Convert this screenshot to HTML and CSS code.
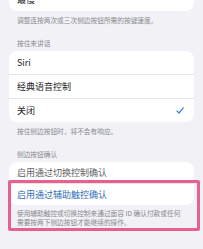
FILE: index.html
```html
<!DOCTYPE html>
<html lang="zh-CN">
<head>
<meta charset="utf-8">
<link rel="stylesheet" href="styles.css">
</head>
<body>
<div class="page">
  <div class="card first">
    <div class="row">最慢</div>
  </div>
  <p class="foot">调整连按两次或三次侧边按钮所需的按键速度。</p>

  <p class="head">按住来讲话</p>
  <div class="card">
    <div class="row">Siri</div>
    <div class="row">经典语音控制</div>
    <div class="row">关闭
      <svg class="check" width="8" height="7" viewBox="0 0 8 7"><path d="M0.8 3.8 L3 6 L7.2 0.8" fill="none" stroke="#3a7fe0" stroke-width="1.2" stroke-linecap="round" stroke-linejoin="round"/></svg>
    </div>
  </div>
  <p class="foot">按住侧边按钮时，将不会有响应。</p>

  <p class="head">侧边按钮确认</p>
  <div class="card compact">
    <div class="row dim">启用通过切换控制确认</div>
    <div class="row link">启用通过辅助触控确认</div>
  </div>
  <p class="foot tight">使用辅助触控或切换控制来通过面容 ID 确认付款或任何需要按两下侧边按钮才能继续的操作。</p>

  <div class="highlight"></div>
</div>
</body>
</html>
```

FILE: styles.css
```css
html, body {
  margin: 0;
  padding: 0;
  background: #f1f1f6;
}

body {
  font-family: "Noto Sans CJK SC", "Noto Sans", sans-serif;
  width: 203px;
  height: 249px;
  overflow: hidden;
}

.page {
  position: relative;
  display: flow-root;
  height: 249px;
  padding: 0 9px;
}

.card {
  background: #ffffff;
  border-radius: 8px;
  overflow: hidden;
}

.card.first {
  margin-top: -12px;
}

.row {
  position: relative;
  height: 23px;
  display: flex;
  align-items: center;
  justify-content: space-between;
  padding: 0 10px 0 8px;
  font-size: 9px;
  color: #1c1c1e;
}

.row + .row {
  border-top: 1px solid #e6e6ea;
}

.compact .row {
  height: 21px;
}

.row.dim {
  color: #5e5e62;
}

.row.link {
  color: #2f6db6;
}

.check {
  display: block;
}

.foot {
  margin: 0;
  padding: 5px 8px 0;
  font-size: 6.7px;
  line-height: 9px;
  color: #8a8a8e;
}

.foot.tight {
  padding-top: 4px;
  line-height: 8.5px;
}

.head {
  margin: 13.5px 0 3.5px;
  padding: 0 8px;
  font-size: 6.7px;
  line-height: 9px;
  color: #8a8a8e;
}

.highlight {
  position: absolute;
  left: 8px;
  top: 180px;
  width: 186px;
  height: 45px;
  border: 3px solid #e8608c;
  border-radius: 2px;
}
```
